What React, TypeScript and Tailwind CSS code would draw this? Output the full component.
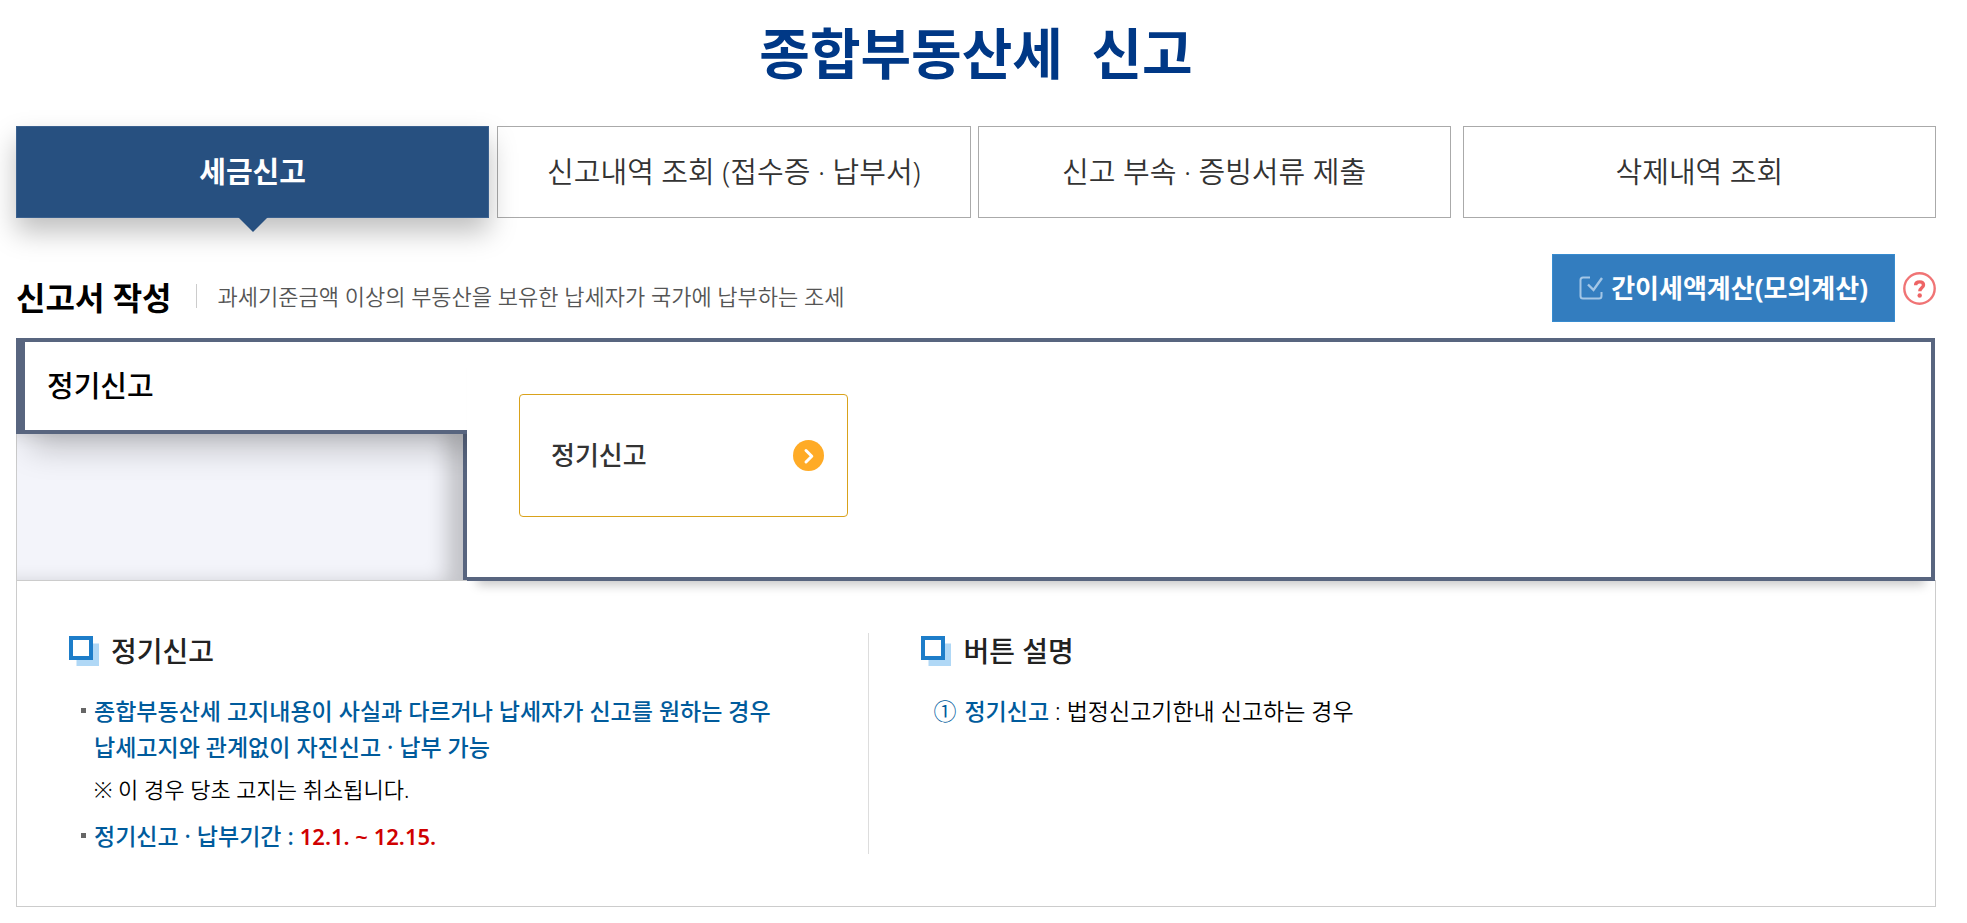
import React from "react";

interface Tab {
  id: string;
  label: string;
  className: string;
}

const tabs: Tab[] = [
  { id: "report", label: "세금신고", className: "" },
  { id: "history", label: "신고내역 조회 (접수증 · 납부서)", className: "ml-2" },
  { id: "documents", label: "신고 부속 · 증빙서류 제출", className: "ml-[7px]" },
  { id: "deleted", label: "삭제내역 조회", className: "ml-3" },
];

const CheckIcon = () => (
  <svg width="24" height="24" viewBox="0 0 24 24" fill="none" aria-hidden="true">
    <path
      d="M11 1.500H4Q1.500 1.500 1.500 4V20Q1.500 22.500 4 22.500H20Q22.500 22.500 22.500 20V16"
      stroke="#a3c6e6"
      strokeWidth="2"
    />
    <path d="M9 8.500L14.500 14L23 2" stroke="#a3c6e6" strokeWidth="2.400" />
  </svg>
);

const HelpIcon = () => (
  <svg width="33" height="33" viewBox="0 0 33 33" fill="none" aria-hidden="true">
    <circle cx="16.500" cy="16.500" r="15.200" stroke="#f07475" strokeWidth="2.400" />
    <path
      d="M12.600 13.200C12.600 10.800 14.300 9.900 16.600 9.900C19 9.900 20.500 11 20.500 13C20.500 15.800 16.800 15.800 16.800 19.300"
      stroke="#ee6465"
      strokeWidth="3.400"
    />
    <circle cx="16.700" cy="23.500" r="2.200" fill="#ee6465" />
  </svg>
);

const ArrowIcon = () => (
  <svg width="31" height="31" viewBox="0 0 31 31" fill="none" aria-hidden="true">
    <circle cx="15.500" cy="15.500" r="15.500" fill="#ffab26" />
    <path
      d="M13 10.500L18.800 16.200L13 22"
      stroke="#fff"
      strokeWidth="3"
      strokeLinecap="round"
      strokeLinejoin="round"
    />
  </svg>
);

const SquareIcon = () => (
  <svg width="30" height="30" viewBox="0 0 30 30" aria-hidden="true">
    <rect x="7.500" y="7.500" width="22.500" height="22.500" fill="#b0d8f6" />
    <rect x="2" y="2" width="20" height="20" fill="#fff" stroke="#1d7dc9" strokeWidth="4" />
  </svg>
);

const SectionTitle: React.FC<{ children: React.ReactNode }> = ({ children }) => (
  <h3 className="flex h-9 items-center gap-3 text-[28px] font-medium text-[#222]">
    <SquareIcon />
    {children}
  </h3>
);

const Bullet = () => <span className="mt-[15px] size-[5px] shrink-0 bg-[#666]" />;

const App: React.FC = () => {
  return (
    <main
      lang="ko"
      className="bg-white pr-[31px] pl-4 font-['Noto_Sans','Noto_Sans_CJK_KR',sans-serif] text-black"
    >
      <h1 className="pt-[11px] pb-[31px] text-center text-[55px] leading-[84px] font-bold text-[#003886]">
        종합부동산세&nbsp; 신고
      </h1>

      <nav className="flex">
        {tabs.map((tab, index) =>
          index === 0 ? (
            <button
              key={tab.id}
              type="button"
              aria-current="page"
              className="relative h-[92px] flex-1 border border-[#3a608e] bg-[#275080] text-[29px] font-bold text-white shadow-[0_14px_26px_rgba(0,0,0,0.25)]"
            >
              {tab.label}
              <svg
                className="absolute top-[90px] left-1/2 -ml-[15px]"
                width="30"
                height="15"
                viewBox="0 0 30 15"
                aria-hidden="true"
              >
                <path d="M0 0H30L15 15Z" fill="#275080" />
              </svg>
            </button>
          ) : (
            <button
              key={tab.id}
              type="button"
              className={`h-[92px] flex-1 border border-[#aaa] bg-white text-[29px] font-[350] text-[#333] ${tab.className}`}
            >
              {tab.label}
            </button>
          )
        )}
      </nav>

      <header className="mt-9 mb-4 flex h-17 items-center justify-between">
        <div className="flex items-start pt-5">
          <h2 className="text-[32px] leading-10 font-bold">신고서 작성</h2>
          <p className="mt-1.5 ml-6 border-l border-[#ccc] pl-[21px] text-[22px] leading-6 font-[350] text-[#555]">
            과세기준금액 이상의 부동산을 보유한 납세자가 국가에 납부하는 조세
          </p>
        </div>
        <div className="flex items-center gap-2">
          <button
            type="button"
            className="flex h-17 items-center gap-2 border border-[#378bcf] bg-[#337dbf] px-[26px] text-[26px] font-bold text-white"
          >
            <CheckIcon />
            간이세액계산(모의계산)
          </button>
          <button type="button" aria-label="도움말">
            <HelpIcon />
          </button>
        </div>
      </header>

      <section className="flex">
        <div className="flex w-[451px] flex-col overflow-hidden">
          <h3 className="relative z-10 h-24 border-y-4 border-l-9 border-[#58657f] bg-white pl-[22px] text-[29px] leading-[88px] font-medium shadow-[14px_14px_32px_rgba(0,0,0,0.22)]">
            정기신고
          </h3>
          <div className="flex-1 border-r-4 border-l border-r-[#58657f] border-l-[#ccc] bg-[#f3f4fa] shadow-[inset_-20px_0_20px_-4px_rgba(0,0,0,0.2)]" />
        </div>
        <div className="relative z-20 mr-px -mb-px flex-1 border-4 border-l-0 border-[#58657f] bg-white px-[52px] pt-[52px] pb-[60px] shadow-[0_14px_10px_-10px_rgba(0,0,0,0.22)]">
          <button
            type="button"
            className="flex h-[123px] w-[329px] items-center justify-between rounded border border-[#d9a21b] pr-[23px] pl-[31px] text-[26px] font-medium text-[#333]"
          >
            정기신고
            <ArrowIcon />
          </button>
        </div>
      </section>

      <section className="grid grid-cols-[4fr_5fr] border border-[#ccc] py-[52px] text-[23px] leading-9">
        <div className="border-r border-[#ddd] pl-[52px]">
          <SectionTitle>정기신고</SectionTitle>
          <ul className="mt-6 pl-3 font-medium text-[#005b9c]">
            <li className="flex gap-2">
              <Bullet />
              <div>
                <p>
                  종합부동산세 고지내용이 사실과 다르거나 납세자가 신고를 원하는 경우
                  <br />
                  납세고지와 관계없이 자진신고 · 납부 가능
                </p>
                <p className="mt-1.5 text-[22px] font-[350] text-black">
                  ※ 이 경우 당초 고지는 취소됩니다.
                </p>
              </div>
            </li>
            <li className="mt-[11px] flex gap-2">
              <Bullet />
              <p>
                정기신고 · 납부기간 :{" "}
                <strong className="text-[22px] font-semibold text-[#d00000]">12.1. ~ 12.15.</strong>
              </p>
            </li>
          </ul>
        </div>
        <div className="pl-[52px]">
          <SectionTitle>버튼 설명</SectionTitle>
          <p className="mt-6 flex gap-2 pl-3 font-[350]">
            <span className="text-[#005b9c]">①</span>
            <span>
              <span className="font-medium text-[#005b9c]">정기신고</span> : 법정신고기한내 신고하는 경우
            </span>
          </p>
        </div>
      </section>
    </main>
  );
};

export default App;
